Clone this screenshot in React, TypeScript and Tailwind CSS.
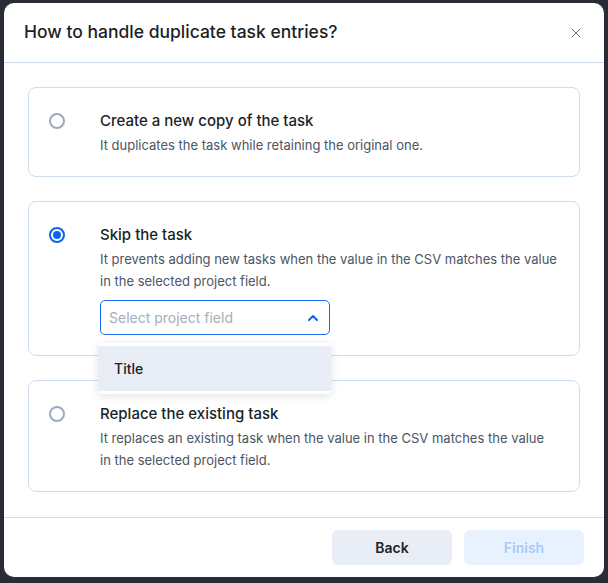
import { X } from "lucide-react";

const OPTIONS = [
  {
    id: "copy",
    title: "Create a new copy of the task",
    desc: "It duplicates the task while retaining the original one.",
  },
  {
    id: "skip",
    title: "Skip the task",
    desc: "It prevents adding new tasks when the value in the CSV matches the value in the selected project field.",
  },
  {
    id: "replace",
    title: "Replace the existing task",
    desc: "It replaces an existing task when the value in the CSV matches the value in the selected project field.",
  },
];

function Radio({ checked }: { checked: boolean }) {
  return checked ? (
    <span className="mt-[3px] flex h-4 w-4 shrink-0 items-center justify-center rounded-full border-[2px] border-[#0b63f6]">
      <span className="h-2 w-2 rounded-full bg-[#0b63f6]" />
    </span>
  ) : (
    <span className="mt-[3px] h-4 w-4 shrink-0 rounded-full border-[2px] border-[#9aaac1]" />
  );
}

export default function App() {
  const selected = "skip";

  return (
    <div className="min-h-screen bg-[#2a2c35] pl-1 pr-1 pt-[3px] pb-[5px] font-['Inter',sans-serif]">
      <div className="rounded-[10px] bg-white">
        {/* header */}
        <div className="flex h-[60px] items-center justify-between border-b border-[#cfdcea] pl-5 pr-5">
          <h2 className="text-[17.5px] font-medium text-[#1b1f27]">How to handle duplicate task entries?</h2>
          <X className="h-4 w-4 text-[#6b7280]" strokeWidth={1.5} />
        </div>

        {/* body */}
        <div className="flex flex-col gap-6 px-6 pt-6 pb-[25px]">
          {OPTIONS.map((opt) => (
            <div
              key={opt.id}
              className="relative flex gap-[35px] rounded-lg border border-[#cfdcea] pt-[22px] pb-5 pl-5 pr-[22px]"
            >
              <Radio checked={selected === opt.id} />
              <div className="flex-1">
                <div className="text-[15px] font-medium leading-[22px] text-[#1b1f27]">{opt.title}</div>
                <p className="mt-[2px] text-[13px] leading-[22px] text-[#4b5563]">{opt.desc}</p>
                {opt.id === "skip" && (
                  <div className="relative mt-2 w-[230px]">
                    <div className="flex h-[35px] items-center justify-between rounded-[5px] border border-[#1a6cf5] pl-2 pr-2.5">
                      <span className="text-[14px] text-[#a7adb8]">Select project field</span>
                      <svg width="12" height="8" viewBox="0 0 12 8" fill="none">
                        <path d="M2 6L6 2L10 6" stroke="#0b63f6" strokeWidth="2" strokeLinecap="round" strokeLinejoin="round" />
                      </svg>
                    </div>
                    <div className="absolute left-[-2px] top-[43px] z-10 w-[233px] rounded bg-white py-[3px] shadow-[0_2px_8px_rgba(15,23,42,0.12)]">
                      <div className="flex h-[45px] items-center bg-[#e9eef6] pl-4 text-[14px] font-medium text-[#1b1f27]">
                        Title
                      </div>
                    </div>
                  </div>
                )}
              </div>
            </div>
          ))}
        </div>

        {/* footer */}
        <div className="flex justify-end gap-3 border-t border-[#cfdcea] px-5 pt-3 pb-3">
          <button className="h-[35px] w-[120px] rounded-md bg-[#e9eef6] text-[14px] font-semibold text-[#1b1f27]">
            Back
          </button>
          <button className="h-[35px] w-[120px] rounded-md bg-[#e8f1fe] text-[14px] font-semibold text-[#a9c9fb]">
            Finish
          </button>
        </div>
      </div>
    </div>
  );
}
